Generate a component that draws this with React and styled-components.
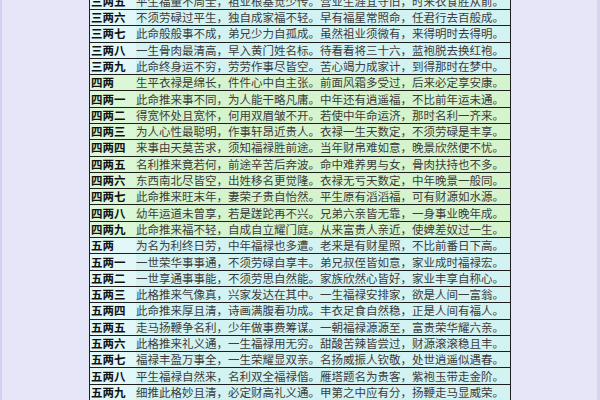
import React from "react";
import styled, { createGlobalStyle } from "styled-components";

const Global = createGlobalStyle`
  html, body { margin: 0; padding: 0; }
  body {
    width: 600px; height: 400px; overflow: hidden;
    background: #e7e6f8;
    font-family: "Noto Sans CJK SC", "Noto Sans", sans-serif;
  }
`;

const Frame = styled.div`
  width: 600px;
  height: 400px;
  box-sizing: border-box;
  border-left: 2px solid #d3d2ee;
  border-right: 3px solid #d6d5f0;
  display: flex;
  padding-left: 87px;
  overflow: hidden;
`;

const Table = styled.div`
  width: 422px;
  margin-top: -6.4px;
  box-sizing: border-box;
  border-left: 1px solid #1e1e1e;
  border-right: 1px solid #1e1e1e;
  display: flex;
  flex-direction: column;
`;

const Row = styled.div`
  height: 16.3px;
  flex: none;
  box-sizing: border-box;
  border-bottom: 1px solid #1e1e1e;
  display: flex;
  align-items: center;
  background: ${(p) => (p.$green ? "#d5f4cd" : "#d3f2f2")};
  font-size: 11.5px;
  line-height: 15px;
  white-space: nowrap;
`;

const Label = styled.div`
  width: 46px;
  flex: none;
  padding-left: 1px;
  box-sizing: border-box;
  height: 100%;
  display: flex;
  align-items: center;
  font-weight: 700;
  color: #111;
  background: ${(p) => (p.$green ? "#dcf7d5" : "#e2f8f8")};
`;

const Verse = styled.div`
  padding-left: 0;
  color: #3c3c3c;
`;

const rows = [
  ["三两五", "平生福量不周全，祖业根基觉少传。营业生涯宜守旧，时来衣食胜从前。"],
  ["三两六", "不须劳碌过平生，独自成家福不轻。早有福星常照命，任君行去百般成。"],
  ["三两七", "此命般般事不成，弟兄少力自孤成。虽然祖业须微有，来得明时去得明。"],
  ["三两八", "一生骨肉最清高，早入黄门姓名标。待看看将三十六，蓝袍脱去换红袍。"],
  ["三两九", "此命终身运不穷，劳劳作事尽皆空。苦心竭力成家计，到得那时在梦中。"],
  ["四两", "生平衣禄是绵长，件件心中自主张。前面风霜多受过，后来必定享安康。"],
  ["四两一", "此命推来事不同，为人能干略凡庸。中年还有逍遥福，不比前年运未通。"],
  ["四两二", "得宽怀处且宽怀，何用双眉皱不开。若使中年命运济，那时名利一齐来。"],
  ["四两三", "为人心性最聪明，作事轩昂近贵人。衣禄一生天数定，不须劳碌是丰享。"],
  ["四两四", "来事由天莫苦求，须知福禄胜前途。当年财帛难如意，晚景欣然便不忧。"],
  ["四两五", "名利推来竟若何，前途辛苦后奔波。命中难养男与女，骨肉扶持也不多。"],
  ["四两六", "东西南北尽皆空，出姓移名更觉隆。衣禄无亏天数定，中年晚景一般同。"],
  ["四两七", "此命推来旺末年，妻荣子贵自怡然。平生原有滔滔福，可有财源如水源。"],
  ["四两八", "幼年运道未曾享，若是蹉跎再不兴。兄弟六亲皆无靠，一身事业晚年成。"],
  ["四两九", "此命推来福不轻，自成自立耀门庭。从来富贵人亲近，使婢差奴过一生。"],
  ["五两", "为名为利终日劳，中年福禄也多遭。老来是有财星照，不比前番日下高。"],
  ["五两一", "一世荣华事事通，不须劳碌自享丰。弟兄叔侄皆如意，家业成时福禄宏。"],
  ["五两二", "一世享通事事能，不须劳思自然能。家族欣然心皆好，家业丰享自称心。"],
  ["五两三", "此格推来气像真，兴家发达在其中。一生福禄安排家，欲是人间一富翁。"],
  ["五两四", "此命推来厚且清，诗画满腹看功成。丰衣足食自然稳，正是人间有福人。"],
  ["五两五", "走马扬鞭争名利，少年做事费筹谋。一朝福禄源源至，富贵荣华耀六亲。"],
  ["五两六", "此格推来礼义通，一生福禄用无穷。甜酸苦辣皆尝过，财源滚滚稳且丰。"],
  ["五两七", "福禄丰盈万事全，一生荣耀显双亲。名扬威振人钦敬，处世逍遥似遇春。"],
  ["五两八", "平生福禄自然来，名利双全福禄偕。雁塔题名为贵客，紫袍玉带走金阶。"],
  ["五两九", "细推此格妙且清，必定财高礼义通。甲第之中应有分，扬鞭走马显威荣。"],
];

export default function App() {
  return (
    <>
      <Global />
      <Frame>
        <Table>
          {rows.map(([k, v]) => {
            const green = k.startsWith("四");
            return (
              <Row key={k} $green={green}>
                <Label $green={green}>{k}</Label>
                <Verse>{v}</Verse>
              </Row>
            );
          })}
        </Table>
      </Frame>
    </>
  );
}
